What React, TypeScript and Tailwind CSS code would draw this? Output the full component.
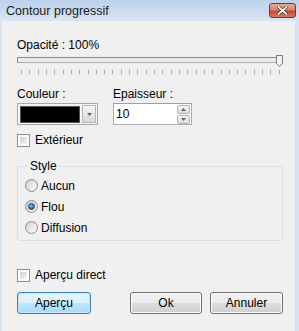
import React, { useState } from 'react';

const font = { fontFamily: '"Liberation Sans", Arial, sans-serif' };

const Checkbox: React.FC<{ label: string }> = ({ label }) => (
  <label className="flex items-center h-[16px] gap-[5px]">
    <span className="w-[13px] h-[13px] border border-[#8e8f8f] bg-white p-[2px]">
      <span className="block w-full h-full bg-gradient-to-br from-[#d0d0d0] to-[#f4f4f4]" />
    </span>
    <span>{label}</span>
  </label>
);

const Radio: React.FC<{ label: string; checked?: boolean }> = ({ label, checked }) => (
  <div className="flex items-center h-[21px] gap-[3px]">
    <span className="w-[13px] h-[13px] rounded-full border border-[#8e8f8f] bg-gradient-to-br from-[#c8c8c8] to-[#f8f8f8] flex items-center justify-center">
      {checked ? (
        <span className="w-[7px] h-[7px] rounded-full bg-[radial-gradient(circle_at_40%_35%,#7fc4ee,#1d5e93_70%)] border border-[#1c4f78]" />
      ) : (
        <span className="w-[9px] h-[9px] rounded-full bg-gradient-to-br from-[#d6d6d6] to-[#fbfbfb]" />
      )}
    </span>
    <span>{label}</span>
  </div>
);

const Btn: React.FC<{ label: string; primary?: boolean; className?: string }> = ({ label, primary, className }) => (
  <button
    className={
      'h-[22px] rounded-[3px] border text-[12px] text-black ' +
      (primary
        ? 'border-[#3c7fb1] bg-[linear-gradient(#eaf6fd_0%,#d9f0fc_50%,#bee6fd_51%,#a7d9f5_100%)] shadow-[inset_0_0_0_1px_#c8e6f8] '
        : 'border-[#707070] bg-[linear-gradient(#f2f2f2_0%,#ebebeb_50%,#dddddd_51%,#cfcfcf_100%)] shadow-[inset_0_0_0_1px_#fcfcfc] ') +
      (className ?? '')
    }
  >
    {label}
  </button>
);

export default function App() {
  const [ticks] = useState<number[]>(Array.from({ length: 32 }, (_, i) => i));

  return (
    <div className="w-[299px] h-[331px] bg-[#d6e3f2] flex flex-col text-[12px] leading-[16px] text-black" style={font}>
      {/* title bar */}
      <div className="h-[21px] flex items-center justify-between pl-[6px] pr-[3px] bg-gradient-to-b from-[#bcd1ea] to-[#d9e5f3]">
        <span className="text-[12.5px] text-[#1a1a1a]">Contour progressif</span>
        <span className="w-[27px] h-[15px] rounded-[3px] border border-[#7a3528] bg-[linear-gradient(#e9a999_0%,#d9826f_45%,#c44a33_55%,#d67a5f_100%)] flex items-center justify-center">
          <svg width="11" height="9" viewBox="0 0 11 9">
            <path d="M1.5 1 L9.5 8 M9.5 1 L1.5 8" stroke="#5a2418" strokeWidth="3.2" strokeLinecap="square" />
            <path d="M1.5 1 L9.5 8 M9.5 1 L1.5 8" stroke="#ffffff" strokeWidth="1.8" strokeLinecap="square" />
          </svg>
        </span>
      </div>

      {/* body */}
      <div className="flex-1 ml-[2px] mr-[4px] bg-[#f0f0f0] pl-[15px] pr-[12px] flex flex-col">
        <div className="mt-[16px]">Opacité : 100%</div>

        {/* slider */}
        <div className="mt-[2px] h-[12px] flex items-start">
          <div className="mt-[2px] h-[6px] flex-1 border border-[#b1b1b1] border-t-[#8c8c8c] border-l-[#8c8c8c] bg-[#e7eaea]" />
          <svg width="7" height="12" viewBox="0 0 7 12" className="-ml-[5px]">
            <path d="M0.5 0.5 H6.5 V8.5 L3.5 11.5 L0.5 8.5 Z" fill="#f2f2f2" stroke="#7a7a7a" />
          </svg>
        </div>
        <div className="mt-[3px] h-[4px] flex justify-between pl-[4px] pr-[3px]">
          {ticks.map(t => (
            <span key={t} className="w-px h-[4px] bg-[#a6a6a6]" />
          ))}
        </div>

        {/* color & thickness */}
        <div className="mt-[12px] flex gap-[15px]">
          <div className="flex flex-col">
            <span>Couleur :</span>
            <div className="mt-px w-[81px] h-[22px] border border-[#a7a7a7] bg-[#f5f5f5] flex items-center pl-[2px] pr-[1px] gap-[2px]">
              <span className="w-[62px] h-[17px] bg-black border border-[#555]" />
              <span className="w-[14px] h-[18px] border border-[#b5b5b5] bg-gradient-to-b from-[#f6f6f6] to-[#d8d8d8] flex items-center justify-center">
                <svg width="5" height="3" viewBox="0 0 5 3">
                  <path d="M0 0 H5 L2.5 3 Z" fill="#4d6185" />
                </svg>
              </span>
            </div>
          </div>
          <div className="flex flex-col">
            <span>Epaisseur :</span>
            <div className="mt-px w-[79px] h-[22px] border border-[#abadb3] border-t-[#9ea0a6] bg-white flex items-center pl-[2px] pr-[1px]">
              <span className="flex-1">10</span>
              <div className="flex flex-col gap-px">
                <span className="w-[13px] h-[9px] border border-[#b5b5b5] rounded-[2px] bg-gradient-to-b from-[#f6f6f6] to-[#dcdcdc] flex items-center justify-center">
                  <svg width="5" height="3" viewBox="0 0 5 3">
                    <path d="M0 3 H5 L2.5 0 Z" fill="#4d6185" />
                  </svg>
                </span>
                <span className="w-[13px] h-[9px] border border-[#b5b5b5] rounded-[2px] bg-gradient-to-b from-[#f6f6f6] to-[#dcdcdc] flex items-center justify-center">
                  <svg width="5" height="3" viewBox="0 0 5 3">
                    <path d="M0 0 H5 L2.5 3 Z" fill="#4d6185" />
                  </svg>
                </span>
              </div>
            </div>
          </div>
        </div>

        <div className="mt-[7px]">
          <Checkbox label="Extérieur" />
        </div>

        {/* style group */}
        <fieldset className="mt-[10px] border border-[#d5dfe5] rounded-[3px] pl-[7px] pt-px pb-[2px]">
          <legend className="ml-[3px] px-[2px]">Style</legend>
          <Radio label="Aucun" />
          <Radio label="Flou" checked />
          <Radio label="Diffusion" />
        </fieldset>

        <div className="mt-[26px]">
          <Checkbox label="Aperçu direct" />
        </div>

        <div className="mt-[9px] flex">
          <Btn label="Aperçu" primary className="w-[74px]" />
          <Btn label="Ok" className="w-[72px] ml-auto" />
          <Btn label="Annuler" className="w-[73px] ml-[8px]" />
        </div>
      </div>
    </div>
  );
}
